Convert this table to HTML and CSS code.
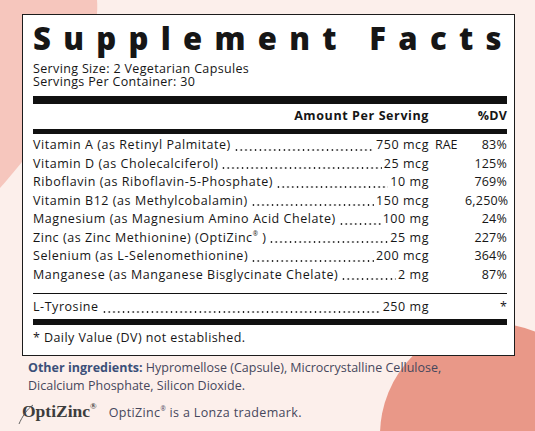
FILE: index.html
```html
<!DOCTYPE html>
<html lang="en">
<head>
  <meta charset="UTF-8">
  <meta name="viewport" content="width=device-width, initial-scale=1.0">
  <title>Supplement Facts</title>
  <link rel="stylesheet" href="styles.css">
</head>
<body>
  <div class="stage">
    <svg class="blob-left" width="110" height="200" viewBox="0 0 110 200"><path d="M0 0 H97 C101 45 62 118 0 188 Z" fill="#f6c6bd"/></svg>
    <div class="blob-circle"></div>

    <div class="page">
      <div class="facts">
        <h1>Supplement Facts</h1>
        <div class="serving">
          <div>Serving Size: 2 Vegetarian Capsules</div>
          <div>Servings Per Container: 30</div>
        </div>
        <div class="bar thick"></div>

        <div class="row head">
          <span class="fill"></span>
          <span class="amt">Amount Per Serving</span>
          <span class="unit"></span>
          <span class="dv">%DV</span>
        </div>
        <div class="bar mid"></div>

        <div class="list">
          <div class="row"><span class="name">Vitamin A (as Retinyl Palmitate)</span><span class="dots"></span><span class="amt">750 mcg</span><span class="unit">RAE</span><span class="dv">83%</span></div>
          <div class="row"><span class="name">Vitamin D (as Cholecalciferol)</span><span class="dots"></span><span class="amt">25 mcg</span><span class="unit"></span><span class="dv">125%</span></div>
          <div class="row"><span class="name">Riboflavin (as Riboflavin-5-Phosphate)</span><span class="dots"></span><span class="amt">10 mg</span><span class="unit"></span><span class="dv">769%</span></div>
          <div class="row"><span class="name">Vitamin B12 (as Methylcobalamin)</span><span class="dots"></span><span class="amt">150 mcg</span><span class="unit"></span><span class="dv">6,250%</span></div>
          <div class="row"><span class="name">Magnesium (as Magnesium Amino Acid Chelate)</span><span class="dots"></span><span class="amt">100 mg</span><span class="unit"></span><span class="dv">24%</span></div>
          <div class="row"><span class="name">Zinc (as Zinc Methionine) (OptiZinc<sup>®</sup> )</span><span class="dots"></span><span class="amt">25 mg</span><span class="unit"></span><span class="dv">227%</span></div>
          <div class="row"><span class="name">Selenium (as L-Selenomethionine)</span><span class="dots"></span><span class="amt">200 mcg</span><span class="unit"></span><span class="dv">364%</span></div>
          <div class="row"><span class="name">Manganese (as Manganese Bisglycinate Chelate)</span><span class="dots"></span><span class="amt">2 mg</span><span class="unit"></span><span class="dv">87%</span></div>
        </div>
        <div class="bar thin"></div>

        <div class="row tyro"><span class="name">L-Tyrosine</span><span class="dots"></span><span class="amt">250 mg</span><span class="unit"></span><span class="dv">*</span></div>
        <div class="bar bottom"></div>

        <p class="note">* Daily Value (DV) not established.</p>
      </div>

      <p class="ingredients"><strong>Other ingredients:</strong> Hypromellose (Capsule), Microcrystalline Cellulose,<br>Dicalcium Phosphate, Silicon Dioxide.</p>

      <div class="brand">
        <span class="logo">
          <svg class="swoosh" width="16" height="22" viewBox="0 0 16 22"><path d="M1 21 C4 14 9 6 15 2" fill="none" stroke="#555" stroke-width="0.9"/></svg>
          OptiZinc<sup>®</sup>
        </span>
        <span class="tm">OptiZinc<sup>®</sup> is a Lonza trademark.</span>
      </div>
    </div>
  </div>
</body>
</html>
```

FILE: styles.css
```css
html, body {
  margin: 0;
  overflow: hidden;
}
body {
  background-color: #fcefeb;
  font-family: 'Open Sans', sans-serif;
  color: #161616;
}
.stage {
  position: relative;
  width: 535px;
  height: 431px;
  overflow: hidden;
}
.blob-left {
  position: absolute;
  left: 0;
  top: 0;
}
.blob-circle {
  position: absolute;
  left: 380px;
  top: 323px;
  width: 224px;
  height: 224px;
  border-radius: 50%;
  background: #e99888;
}
.page {
  position: relative;
  padding: 14px 0 0 22px;
}
.facts {
  width: 474px;
  background: #fff;
  border: 1.5px solid #1c1c1c;
  padding: 4.5px 7px 8px 10px;
}
h1 {
  margin: 0 -14px 0 0;
  font-size: 31px;
  line-height: 36px;
  font-weight: 800;
  letter-spacing: 12.3px;
  white-space: nowrap;
}
.serving {
  margin-top: 6.4px;
  font-size: 12.5px;
  line-height: 13.4px;
  letter-spacing: 0.35px;
}
.bar {
  background: #111;
}
.bar.thick {
  height: 8px;
  margin-top: 7px;
}
.bar.mid {
  height: 5px;
  margin-top: 4.2px;
}
.bar.thin {
  height: 1.5px;
  margin-top: 8.5px;
}
.bar.bottom {
  height: 6px;
  margin-top: 2.2px;
}
.row {
  display: flex;
  font-size: 12.5px;
  line-height: 18.5px;
  letter-spacing: 0.55px;
  white-space: nowrap;
}
.row.head {
  margin-top: 2.8px;
  line-height: 18px;
  font-weight: 700;
  letter-spacing: 0.6px;
}
.list {
  margin-top: 2.6px;
}
.row.tyro {
  margin-top: 4.1px;
}
.fill {
  flex: 1;
}
.dots {
  flex: 1;
  margin: 0 2px 0 3px;
  background-image: radial-gradient(circle, #222 0.75px, transparent 1.15px);
  background-size: 4.8px 4px;
  background-repeat: repeat-x;
  background-position: 0 11.6px;
}
.unit {
  width: 30px;
  padding-left: 6px;
  letter-spacing: 0;
}
.dv {
  width: 42px;
  text-align: right;
  letter-spacing: 0.2px;
}
sup {
  font-size: 0.5em;
  line-height: 0;
  vertical-align: 0.9em;
}
.note {
  margin: 4px 0 0;
  font-size: 12.5px;
  line-height: 18px;
  letter-spacing: 0.43px;
}
.ingredients {
  margin: 3px 0 0 6px;
  font-size: 12.5px;
  line-height: 17.5px;
  color: #46475c;
}
.ingredients strong {
  color: #3b5079;
  font-weight: 700;
}
.brand {
  display: flex;
  align-items: baseline;
  gap: 12px;
  margin-top: 5px;
  line-height: 24px;
}
.logo {
  position: relative;
  font-family: 'Liberation Serif', serif;
  font-size: 17.5px;
  font-weight: 700;
  color: #3d3d3d;
}
.swoosh {
  position: absolute;
  left: -4px;
  top: 4px;
}
.tm {
  font-size: 12.5px;
  letter-spacing: 0.35px;
  color: #46475c;
}
```
